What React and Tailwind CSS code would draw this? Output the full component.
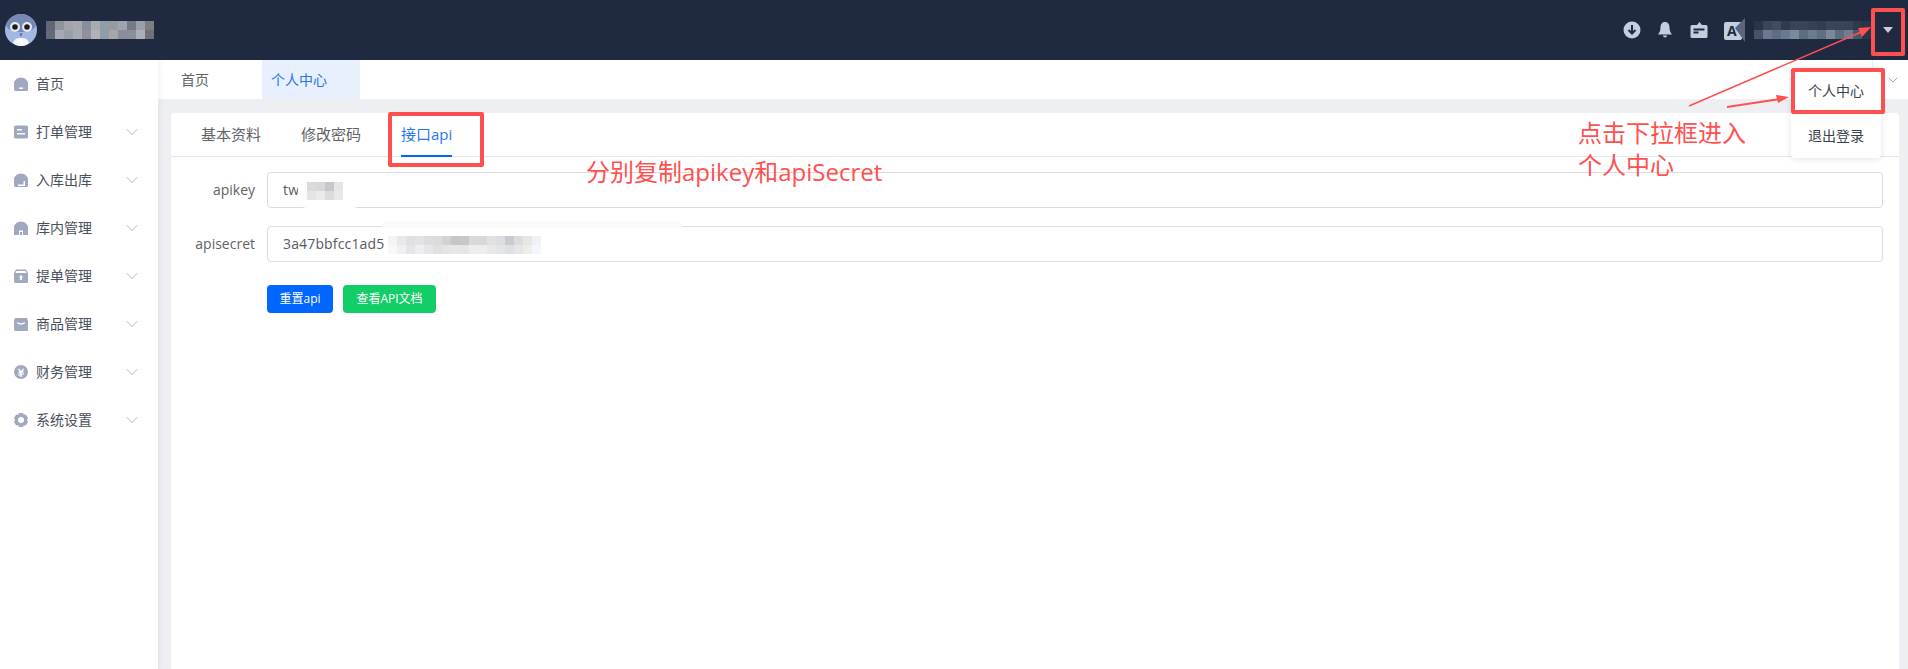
import { ChevronDown } from 'lucide-react'

const Mosaic = ({ rows, size = 9, className = '' }) => (
  <svg width={rows[0].length * size} height={rows.length * size} className={className}>
    {rows.map((row, y) => row.map((c, x) => <rect key={x} x={x * size} y={y * size} width={size} height={size} fill={c} />))}
  </svg>
)

const titleRows = [
  ['#5f6675', '#8f939c', '#a2a5aa', '#a7a7b0', '#8a8d9e', '#a9abb0', '#8f9cab', '#999aa0', '#9fa4ae', '#777a84', '#98a0ad', '#7d7e80'],
  ['#636b7a', '#a8a8b4', '#9a9ea6', '#a9a9b2', '#8f8fa2', '#b2b2b8', '#8f9dab', '#a5a5ab', '#8a8e9c', '#8a8f9c', '#a9aeb8', '#6f7078'],
]
const userRows = [
  ['#2a3448', '#3b4458', '#434b5e', '#2f3a50', '#3a4358', '#3a4358', '#384056', '#333c52', '#3d4459', '#3a4358', '#3a4257', '#2f394e', '#2a3448'],
  ['#48536a', '#6c7890', '#5f6c84', '#6a7a90', '#7b8a9a', '#5e6c82', '#6c7a90', '#5f6e82', '#7a8898', '#5e6c82', '#6f7d90', '#4a566c', '#2a3448'],
]
const keyRows = [
  ['#ffffff', '#dbdadc', '#d9d7d7', '#c5c7cd', '#e3e5e8'],
  ['#fbfbfb', '#e6e4e5', '#ecebeb', '#dcdcde', '#e9e9ea'],
]
const secretRows = [
  ['#f4f4f4', '#e8e8ea', '#dfe0e4', '#e2e3e6', '#dcdde0', '#dddcdd', '#d2d2d4', '#c7c5c6', '#c9c8c9', '#d9d9dc', '#d7d8da', '#e0e1e3', '#dcdde0', '#c9cbd0', '#dcdcde', '#e6e6e4', '#edf1f8'],
  ['#f8f8f8', '#f0f0f0', '#e4e5e7', '#eeeeef', '#e7e7e9', '#e0e0e2', '#e5e5e6', '#e7e7e8', '#e6e6e7', '#eeeeef', '#eeeeef', '#e8e9ea', '#e4e5e7', '#dfe0e2', '#e6e6e8', '#ededec', '#f4f6fb'],
]

const icons = {
  home: <path d="M0 6C0 3.500 3.500.5 7 .5S14 3.500 14 6v6.500a1.500 1.500 0 0 1-1.500 1.500h-11A1.500 1.500 0 0 1 0 12.500Zm5 4.500V12h4v-1.500Z" fillRule="evenodd" />,
  order: <path d="M1.500.5h11A1.500 1.500 0 0 1 14 2v10a1.500 1.500 0 0 1-1.500 1.500h-11A1.500 1.500 0 0 1 0 12V2A1.500 1.500 0 0 1 1.500.5ZM3 4v1.500h5V4Zm0 4v1.500h8V8Z" fillRule="evenodd" />,
  stock: <path d="M0 6C0 3.500 3.500.5 7 .5S14 3.500 14 6v6.500a1.500 1.500 0 0 1-1.500 1.500h-11A1.500 1.500 0 0 1 0 12.500Zm4 5.500V13h7V8H9.500v3.500Z" fillRule="evenodd" />,
  store: <path d="M0 6C0 3.500 3.500.5 7 .5S14 3.500 14 6v8H9V9.500H5V14H0Zm6 5v3h2v-3Z" fillRule="evenodd" />,
  bill: <path d="M2 .5h10L14 4v8.500a1.500 1.500 0 0 1-1.500 1.500h-11A1.500 1.500 0 0 1 0 12.500V4ZM1.500 4h11l-1-2h-9ZM7 6 4.500 8.500H6V11h2V8.500h1.500Z" fillRule="evenodd" />,
  goods: <path d="M1 1h12l1 3v8.500a1.500 1.500 0 0 1-1.500 1.500h-11A1.500 1.500 0 0 1 0 12.500V4Zm2 4v1c1.500 2 6.500 2 8 0V5c-2 1.500-6 1.500-8 0Z" fillRule="evenodd" />,
  money: <path d="M7 0a7 7 0 1 1 0 14A7 7 0 0 1 7 0ZM5 3.500 7 6l2-2.500 1 .5-1.500 2.500H10v1H7.700v1H10v1H7.700V12H6.300v-1.500H4v-1h2.300v-1H4v-1h1.500L4 4Z" fillRule="evenodd" />,
  gear: <path d="M5 0h4l.8 1.800 2-.2L14 5l-1 2 1 2-2.200 3.400-2-.2L9 14H5l-.8-1.800-2 .2L0 9l1-2-1-2 2.200-3.400 2 .2ZM7 4a3 3 0 1 0 0 6 3 3 0 0 0 0-6Z" fillRule="evenodd" />,
}

const menu = [
  { label: '首页', icon: 'home' },
  { label: '打单管理', icon: 'order', sub: true },
  { label: '入库出库', icon: 'stock', sub: true },
  { label: '库内管理', icon: 'store', sub: true },
  { label: '提单管理', icon: 'bill', sub: true },
  { label: '商品管理', icon: 'goods', sub: true },
  { label: '财务管理', icon: 'money', sub: true },
  { label: '系统设置', icon: 'gear', sub: true },
]

const MenuItem = ({ item }) => (
  <div className="flex items-center h-12 pl-[14px] pr-[16px] text-sm text-[#4a4f5c]">
    <svg width="14" height="14" viewBox="0 0 14 14" fill="#a0a9c0" className="shrink-0">{icons[item.icon]}</svg>
    <span className="ml-[8px] flex-1">{item.label}</span>
    {item.sub && <ChevronDown size={20} strokeWidth={1.5} className="text-[#d3d8e2]" />}
  </div>
)

const Owl = () => (
  <svg width="32" height="32" viewBox="0 0 32 32">
    <circle cx="16" cy="16" r="16" fill="#a4b8e6" />
    <path d="M1 11C3 4 10 0 16 0s13 4 15 11c-1 3-4 7-15 7S2 14 1 11Z" fill="#7688b4" />
    <circle cx="10" cy="13" r="5" fill="#e8ecf2" />
    <circle cx="22" cy="13" r="5" fill="#e8ecf2" />
    <circle cx="10" cy="13" r="2.800" fill="#1c1c20" />
    <circle cx="22" cy="13" r="2.800" fill="#1c1c20" />
    <path d="M8 29c1-4 4-5 8-5s7 1 8 5c-2 2-5 3-8 3s-6-1-8-3Z" fill="#f8f8fa" />
    <path d="M15 19l1 3 1-3" stroke="#5d6c8c" fill="none" />
  </svg>
)

const Field = ({ label, children }) => (
  <div className="flex items-center">
    <label className="w-[84px] text-right text-sm text-[#606266]">{label}</label>
    <div className="relative ml-3 flex-1 h-9 flex items-center border border-[#dcdcdf] rounded-[4px] pl-[15px] text-sm tracking-[0.15px] text-[#555a64]">
      {children}
    </div>
  </div>
)

export default function App() {
  return (
    <div className="relative h-screen flex flex-col overflow-hidden bg-white font-['Open_Sans','Noto_Sans_CJK_SC',sans-serif]">
      <header className="h-[60px] shrink-0 flex items-center bg-[#1f2a40] pl-[5px]">
        <Owl />
        <Mosaic rows={titleRows} className="ml-[9px]" />
        <div className="ml-auto flex items-center pr-[15px]">
          <svg width="18" height="18" viewBox="0 0 18 18" className="mr-[16px]">
            <circle cx="9" cy="9" r="8.500" fill="#c3cede" />
            <path d="M9 4v8M5.500 9 9 12.500 12.500 9" stroke="#1f2a40" strokeWidth="2" fill="none" />
          </svg>
          <svg width="16" height="18" viewBox="0 0 16 18" className="mr-[17px]" fill="#c3cede">
            <path d="M8 1c3.200 0 4.500 2.500 4.500 5.500 0 3 1 5 2.500 7H1c1.500-2 2.500-4 2.500-7C3.500 3.500 4.800 1 8 1Zm-2 13.500h4A2 2 0 0 1 6 14.500Z" />
          </svg>
          <svg width="18" height="18" viewBox="0 0 18 18" className="mr-[16px]">
            <path d="M2 4h5l2.500-3L12 4h4a1.500 1.500 0 0 1 1.500 1.500v10A1.500 1.500 0 0 1 16 17H2A1.500 1.500 0 0 1 .500 15.500v-10A1.500 1.500 0 0 1 2 4Z" fill="#c3cede" />
            <path d="M3.500 8.500h11M3.500 11.500h5" stroke="#1f2a40" strokeWidth="1.800" />
          </svg>
          <div className="relative w-[18px] h-[18px] mt-[2px] rounded-[2px] bg-[#c3cede] flex items-center justify-start pl-[3px] text-[14px] font-bold leading-none text-[#1f2a40] mr-[12px]">
            A
            <svg width="10" height="24" viewBox="0 0 10 24" className="absolute -right-[3px] -top-[4px]">
              <path d="M10 0v24L0 10Z" fill="#5b667b" />
            </svg>
          </div>
          <Mosaic rows={userRows} className="mr-[12px]" />
          <div className="w-0 h-0 border-x-[5px] border-x-transparent border-t-[6px] border-t-[#c3cede]"></div>
        </div>
      </header>

      <div className="flex-1 flex min-h-0">
        <aside className="relative z-10 w-[158px] shrink-0 bg-white shadow-[2px_0_6px_rgba(0,0,0,0.05)]">
          {menu.map(m => <MenuItem key={m.label} item={m} />)}
        </aside>

        <main className="flex-1 min-w-0 flex flex-col bg-[#eeeff2]">
          <div className="h-[39px] shrink-0 flex items-center bg-white text-sm">
            <div className="w-[104px] pl-[23px] text-[#606266]">首页</div>
            <div className="w-[98px] h-full flex items-center pl-[9px] bg-[#e8f0fe] text-[#2a75f0]">个人中心</div>
            <div className="ml-auto h-full w-[36px] border-l border-[#eef0f4] flex items-center justify-center pl-[4px]">
              <ChevronDown size={16} strokeWidth={1.5} className="text-[#9aa8c0]" />
            </div>
          </div>

          <div className="flex-1 min-h-0 ml-[13px] mr-[9px] mt-[14px] bg-white rounded-t-[4px]">
            <div className="h-[44px] flex items-stretch gap-[40px] pl-[30px] border-b border-[#e4e7ed] text-[15px]">
              <div className="flex items-center text-[#606266]">基本资料</div>
              <div className="flex items-center text-[#606266]">修改密码</div>
              <div className="flex items-center text-[#2a75f0] border-b-2 border-[#0066ff] -mb-px">接口api</div>
            </div>
            <div className="pt-[15px] pr-[16px] flex flex-col gap-[18px]">
              <Field label="apikey">
                tw
                <Mosaic rows={keyRows} className="absolute left-[30px] top-[9px]" />
                <div className="absolute left-[31px] -bottom-px w-[62px] h-[8px] bg-white rounded-b-lg"></div>
              </Field>
              <Field label="apisecret">
                3a47bbfcc1ad5
                <Mosaic rows={secretRows} className="absolute left-[120px] top-[9px]" />
                <div className="absolute left-[114px] -top-[6px] w-[300px] h-[7px] bg-[#fafafa] rounded-t-lg"></div>
              </Field>
              <div className="flex gap-[10px] pl-[96px] mt-[5px]">
                <button className="w-[66px] h-7 rounded-[4px] bg-[#0066ff] text-xs text-white">重置api</button>
                <button className="w-[93px] h-7 rounded-[4px] bg-[#13ce66] text-xs text-white">查看API文档</button>
              </div>
            </div>
          </div>
        </main>
      </div>

      {/* dropdown */}
      <div className="absolute z-20 left-[1791px] top-[68px] w-[90px] h-[90px] bg-white rounded-[4px] shadow-[0_1px_6px_rgba(100,110,140,0.2)] flex flex-col text-sm text-[#3a3f4a]">
        <div className="h-[45px] flex items-center justify-center">个人中心</div>
        <div className="h-[45px] flex items-center justify-center">退出登录</div>
      </div>

      {/* annotations */}
      <div className="absolute z-30 left-[388px] top-[112px] w-[96px] h-[55px] border-4 border-[#ff5050] rounded-[2px]"></div>
      <div className="absolute z-30 left-[1871px] top-[8px] w-[34px] h-[48px] border-4 border-[#ff5050] rounded-[2px]"></div>
      <div className="absolute z-30 left-[1791px] top-[68px] w-[94px] h-[46px] border-4 border-[#ff5050] rounded-[2px]"></div>
      <svg width="1908" height="669" className="absolute z-30 left-0 top-0 pointer-events-none">
        <path d="M1689 106 1866 30" stroke="#ff5050" strokeWidth="1.500" />
        <path d="M1871 27 1858 28 1862 37Z" fill="#ff5050" />
        <path d="M1727 107 1780 99" stroke="#ff5050" strokeWidth="2" />
        <path d="M1789 97 1776 95 1778 103Z" fill="#ff5050" />
      </svg>
      <div className="absolute z-30 left-[586px] top-[156px] text-2xl leading-8 whitespace-nowrap text-[#ff5050] font-['Open_Sans','Noto_Sans_CJK_SC',sans-serif]">分别复制apikey和apiSecret</div>
      <div className="absolute z-30 left-[1578px] top-[116px] text-2xl leading-8 whitespace-nowrap text-[#ff5050] font-['Noto_Sans_CJK_SC',sans-serif]">点击下拉框进入<br />个人中心</div>
    </div>
  )
}
